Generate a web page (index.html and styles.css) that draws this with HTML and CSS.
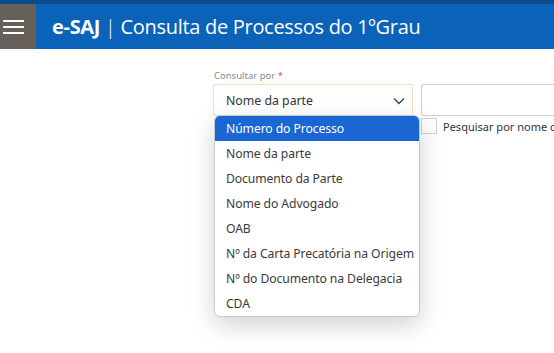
FILE: index.html
```html
<!DOCTYPE html>
<html lang="pt-BR">
<head>
<meta charset="utf-8">
<title>e-SAJ | Consulta de Processos do 1ºGrau</title>
<link rel="stylesheet" href="styles.css">
</head>
<body>
<header class="topbar">
  <div class="strip"></div>
  <div class="band">
    <button class="menu" aria-label="Menu">
      <span></span><span></span><span></span>
    </button>
    <h1 class="title"><b>e-SAJ</b> <span class="sep">|</span> Consulta de Processos do 1ºGrau</h1>
  </div>
</header>
<main class="content">
  <div class="form">
    <div class="field">
      <label class="label">Consultar por <span class="req">*</span></label>
      <div class="row">
        <div class="select-wrap">
          <div class="select">
            <span>Nome da parte</span>
            <svg class="chev" width="12" height="8" viewBox="0 0 12 8"><path d="M1 1.5 L6 6.5 L11 1.5" fill="none" stroke="#444" stroke-width="1.4"/></svg>
          </div>
          <ul class="dropdown">
            <li class="active">Número do Processo</li>
            <li>Nome da parte</li>
            <li>Documento da Parte</li>
            <li>Nome do Advogado</li>
            <li>OAB</li>
            <li>Nº da Carta Precatória na Origem</li>
            <li>Nº do Documento na Delegacia</li>
            <li>CDA</li>
          </ul>
        </div>
        <div class="right">
          <input class="text" type="text">
          <label class="check"><span class="box"></span>Pesquisar por nome completo</label>
        </div>
      </div>
    </div>
  </div>
</main>
</body>
</html>
```
FILE: styles.css
```css
* { box-sizing: border-box; }
html, body { margin: 0; padding: 0; background: #fff; overflow: hidden; }
body { font-family: "Noto Sans", "Open Sans", sans-serif; width: 554px; height: 353px; }

.strip { height: 4px; background: #0c4b8a; }
.band { height: 45px; background: #0a63b8; display: flex; align-items: center; }
.menu {
  width: 36px; height: 45px; background: #675f59; border: 0; padding: 0 0 0 3px;
  display: flex; flex-direction: column; justify-content: center; gap: 4px;
}
.menu span { display: block; width: 21px; height: 2px; background: #fff; }
.title {
  margin: 0 0 0 16px; color: #fff; font-weight: 400; font-size: 20px; white-space: nowrap;
  letter-spacing: -0.3px; font-family: "Open Sans", "Noto Sans", sans-serif;
}
.title b { font-weight: 700; }
.sep { font-weight: 300; }

.content { padding: 20px 0 0 213px; }
.label { display: block; font-size: 9.5px; color: #8a8a8a; margin-bottom: 2px; padding-left: 1px; }
.req { color: #d9534f; }
.row { display: flex; gap: 8px; width: 520px; }
.select-wrap { position: relative; flex: 0 0 200px; }
.select {
  height: 32px; border: 1px solid #f6dec4; border-radius: 2px; display: flex; align-items: center;
  justify-content: space-between; padding: 0 7px 0 12px; font-size: 12.3px; color: #333;
}
.chev { margin-top: 1px; }
.dropdown {
  position: absolute; left: 1px; top: 31px; width: 206px; margin: 0; padding: 0; list-style: none;
  background: #fff; border-radius: 6px; border: 1px solid #c8c8c8;
  box-shadow: 0 8px 24px rgba(0,0,0,0.18); overflow: hidden;
}
.dropdown li { height: 25px; line-height: 25px; padding-left: 11px; font-size: 12.2px; color: #3a3a3a; white-space: nowrap; letter-spacing: -0.1px; }
.dropdown li.active { background: #1a66d2; color: #fff; }
.right { flex: 0 0 300px; display: flex; flex-direction: column; gap: 2px; }
.text { width: 300px; height: 32px; border: 1px solid #cfcfcf; border-radius: 2px; margin: 0; }
.check { display: flex; align-items: center; gap: 6px; font-size: 11px; color: #333; white-space: nowrap; }
.box { width: 16px; height: 16px; border: 1px solid #cfcfcf; background: #fff; }
```
